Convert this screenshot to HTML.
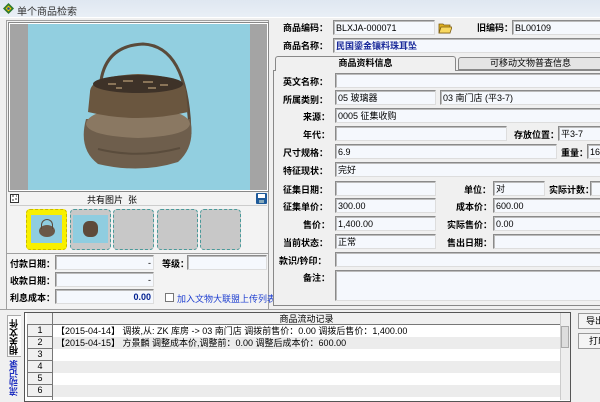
<!DOCTYPE html><html><head><meta charset="utf-8"><style>
*{box-sizing:border-box;margin:0;padding:0}
body{width:600px;height:400px;overflow:hidden;background:#f0f0f0;font-family:"Liberation Sans","Noto Sans CJK SC",sans-serif;font-size:9px;color:#000;position:relative}
.a{position:absolute}
.in{position:absolute;background:#f5f8fd;border:1px solid #8a8a8a;border-right-color:#ddd;border-bottom-color:#ddd;box-shadow:inset 1px 1px 0 #bbb;height:15px;padding:1px 2px;font-size:9px;line-height:12px;white-space:nowrap;overflow:hidden}
.lb{position:absolute;font-weight:bold;font-size:9px;line-height:12px;white-space:nowrap}
.r{text-align:right}
.th{position:absolute;width:41px;height:41px;border:1px dashed #4a9a9a;border-radius:4px;background:#c8c8c8}
.row{position:absolute;left:53px;width:507px;height:12px;font-size:9px;line-height:12px;padding-left:3px;white-space:nowrap;overflow:hidden}
.num{position:absolute;left:27px;width:26px;height:12px;border:1px solid #777;border-top:none;background:#f0f0f0;text-align:center;font-size:9px;line-height:11px}
</style></head><body>
<div class="a" style="left:0;top:0;width:600px;height:17px;background:linear-gradient(#dfe7f1,#e9eff6)"></div>
<svg class="a" style="left:3px;top:3px" width="11" height="11"><path d="M5.5 0L11 5.5 5.5 11 0 5.5Z" fill="#2f7a2f"/><path d="M5.5 2.5L8.5 5.5 5.5 8.5 2.5 5.5Z" fill="#f5c400"/><circle cx="5.5" cy="5.5" r="1.3" fill="#1a50a0"/></svg>
<div class="a" style="left:17px;top:3px;font-size:10px;color:#333">单个商品检索</div>
<div class="a" style="left:0;top:17px;width:600px;height:1px;background:#fff"></div>
<div class="a" style="left:6px;top:20px;width:263px;height:290px;border:1px solid #a0a0a0;background:#f3f3f3"></div>
<div class="a" style="left:8px;top:22px;width:261px;height:170px;border:1px solid #888;background:#fff"></div>
<div class="a" style="left:10px;top:24px;width:257px;height:166px;background:#a4a4a4"></div>
<svg class="a" style="left:28px;top:24px" width="222" height="166">
<rect width="222" height="166" fill="#92cfe0"/>
<path d="M72 70 Q72 22 115 20 Q160 22 162 110" fill="none" stroke="#5a4a3a" stroke-width="3"/>
<path d="M58 95 Q50 125 70 140 Q112 150 150 138 Q168 122 162 95Z" fill="#6e5e4c"/>
<path d="M58 100 Q60 85 110 84 Q160 85 162 100 Q160 112 110 114 Q60 112 58 100Z" fill="#8a7862"/>
<path d="M62 68 Q62 52 110 50 Q158 52 158 68 L160 88 Q110 100 60 88Z" fill="#6a563f"/>
<ellipse cx="110" cy="60" rx="45" ry="9" fill="#3e3228"/>
<path d="M80 60h8M95 57h10M115 58h10M132 61h8M88 64h6M120 64h8" stroke="#8a7458" stroke-width="2"/>
<path d="M70 125 Q110 135 152 124" fill="none" stroke="#5a4c3c" stroke-width="2"/>
</svg>
<svg class="a" style="left:10px;top:194px" width="9" height="9"><rect x=".5" y=".5" width="8" height="8" fill="#fff" stroke="#333"/><path d="M2 2h2M5 5h2M2 6h2M6 2h1" stroke="#333"/></svg>
<div class="a" style="left:87px;top:193px;font-size:9px">共有图片&nbsp; 张</div>
<svg class="a" style="left:256px;top:193px" width="11" height="11"><rect width="11" height="11" rx="1" fill="#1e5a9a"/><rect x="2" y="1" width="7" height="4" fill="#fff"/><rect x="3" y="7" width="5" height="3" fill="#8ab"/></svg>
<div class="a" style="left:10px;top:205px;width:257px;height:1px;background:#ccc"></div>
<div class="th" style="left:26px;top:209px;background:#f8f000;border-color:#c8b800"><div style="position:absolute;left:4px;top:5px;width:31px;height:28px;background:#8fcde0"></div><div style="position:absolute;left:12px;top:15px;width:16px;height:12px;border-radius:50%;background:#6a5848"></div><div style="position:absolute;left:14px;top:9px;width:12px;height:10px;border:1px solid #5a4a3a;border-bottom:none;border-radius:6px 6px 0 0"></div></div>
<div class="th" style="left:70px;top:209px"><div style="position:absolute;left:2px;top:5px;width:35px;height:28px;background:#8fcde0"></div><div style="position:absolute;left:12px;top:11px;width:15px;height:16px;border-radius:40%;background:#5e4a3a"></div></div>
<div class="th" style="left:113px;top:209px"></div>
<div class="th" style="left:157px;top:209px"></div>
<div class="th" style="left:200px;top:209px"></div>
<div class="a" style="left:6px;top:253px;width:263px;height:1px;background:#a0a0a0"></div>
<div class="lb" style="left:10px;top:258px">付款日期：</div>
<div class="in r" style="left:55px;top:255px;width:99px">-</div>
<div class="lb" style="left:162px;top:258px">等级：</div>
<div class="in" style="left:187px;top:255px;width:80px"></div>
<div class="lb" style="left:10px;top:275px">收款日期：</div>
<div class="in r" style="left:55px;top:272px;width:99px">-</div>
<div class="lb" style="left:10px;top:292px">利息成本：</div>
<div class="in r" style="left:55px;top:289px;width:99px;font-weight:bold;color:#002090">0.00</div>
<div class="a" style="left:165px;top:293px;width:9px;height:9px;border:1px solid #777;background:#fff"></div>
<div class="a" style="left:177px;top:292px;color:#2040d0;font-size:9px">加入文物大联盟上传列表</div>
<div class="lb" style="left:283px;top:22px">商品编码：</div>
<div class="in" style="left:333px;top:20px;width:102px">BLXJA-000071</div>
<svg class="a" style="left:438px;top:21px" width="14" height="13"><path d="M1 3h4l1 1h6v8H1Z" fill="#e0b020" stroke="#7a5a10" stroke-width=".8"/><path d="M3 6h11l-2 6H1Z" fill="#f8d860" stroke="#7a5a10" stroke-width=".8"/></svg>
<div class="lb" style="left:477px;top:22px">旧编码：</div>
<div class="in" style="left:512px;top:20px;width:90px">BL00109</div>
<div class="lb" style="left:283px;top:40px">商品名称：</div>
<div class="in" style="left:333px;top:38px;width:270px;color:#1a2a9a;font-weight:bold">民国鎏金镶料珠耳坠</div>
<div class="a" style="left:273px;top:70px;width:330px;height:236px;border:1px solid #888;border-right:none;background:#f0f0f0"></div>
<div class="a" style="left:275px;top:56px;width:181px;height:15px;border:1px solid #888;border-bottom:none;border-radius:3px 3px 0 0;background:#f0f0f0;text-align:center;font-weight:bold;line-height:13px">商品资料信息</div>
<div class="a" style="left:458px;top:57px;width:145px;height:13px;border:1px solid #888;border-radius:3px 3px 0 0;background:#e4e4e4;text-align:center;line-height:11px">可移动文物普查信息</div>
<div class="lb" style="left:283px;top:76px">英文名称：</div><div class="in" style="left:335px;top:73px;width:268px"></div>
<div class="lb" style="left:283px;top:94px">所属类别：</div><div class="in" style="left:335px;top:90px;width:101px">05 玻璃器</div><div class="in" style="left:440px;top:90px;width:163px">03 南门店 (平3-7)</div>
<div class="lb r" style="left:283px;top:111px;width:47px">来源：</div><div class="in" style="left:335px;top:108px;width:268px">0005 征集收购</div>
<div class="lb r" style="left:283px;top:129px;width:47px">年代：</div><div class="in" style="left:335px;top:126px;width:172px"></div>
<div class="lb" style="left:514px;top:129px">存放位置：</div><div class="in" style="left:558px;top:126px;width:45px">平3-7</div>
<div class="lb" style="left:283px;top:147px">尺寸规格：</div><div class="in" style="left:335px;top:144px;width:222px">6.9</div>
<div class="lb" style="left:561px;top:147px">重量：</div><div class="in" style="left:587px;top:144px;width:20px">16</div>
<div class="lb" style="left:283px;top:165px">特征现状：</div><div class="in" style="left:335px;top:162px;width:268px">完好</div>
<div class="lb" style="left:283px;top:184px">征集日期：</div><div class="in" style="left:335px;top:181px;width:101px"></div>
<div class="lb" style="left:464px;top:184px">单位：</div><div class="in" style="left:493px;top:181px;width:52px">对</div>
<div class="lb" style="left:549px;top:184px">实际计数：</div><div class="in" style="left:590px;top:181px;width:15px"></div>
<div class="lb" style="left:283px;top:201px">征集单价：</div><div class="in" style="left:335px;top:198px;width:101px">300.00</div>
<div class="lb" style="left:456px;top:201px">成本价：</div><div class="in" style="left:493px;top:198px;width:110px">600.00</div>
<div class="lb r" style="left:283px;top:219px;width:47px">售价：</div><div class="in" style="left:335px;top:216px;width:101px">1,400.00</div>
<div class="lb" style="left:447px;top:219px">实际售价：</div><div class="in" style="left:493px;top:216px;width:110px">0.00</div>
<div class="lb" style="left:283px;top:237px">当前状态：</div><div class="in" style="left:335px;top:234px;width:101px">正常</div>
<div class="lb" style="left:447px;top:237px">售出日期：</div><div class="in" style="left:493px;top:234px;width:110px"></div>
<div class="lb" style="left:279px;top:255px">款识/钤印：</div><div class="in" style="left:335px;top:252px;width:268px"></div>
<div class="lb r" style="left:283px;top:272px;width:47px">备注：</div><div class="in" style="left:335px;top:270px;width:268px;height:31px"></div>
<div class="a" style="left:0;top:309px;width:600px;height:1px;background:#a0a0a0"></div>
<div class="a" style="left:7px;top:315px;width:14px;height:42px;background:#fbfbfb;border:1px solid #aaa;border-right:none"></div>
<div class="a" style="left:8px;top:319px;font-weight:bold;font-size:9px;writing-mode:vertical-rl;transform:rotate(180deg);line-height:12px">相关文件</div>
<div class="a" style="left:8px;top:360px;font-weight:bold;font-size:9px;color:#2030c0;writing-mode:vertical-rl;transform:rotate(180deg);line-height:12px">流动记录</div>
<div class="a" style="left:24px;top:312px;width:547px;height:90px;border:1px solid #555;background:#fff"></div>
<div class="a" style="left:27px;top:313px;width:533px;height:12px;background:#f0f0f0;border-bottom:1px solid #777"></div>
<div class="a" style="left:52px;top:313px;width:1px;height:87px;background:#777"></div>
<div class="a" style="left:53px;top:313px;width:507px;text-align:center;line-height:12px">商品流动记录</div>
<div class="num" style="top:325px">1</div><div class="num" style="top:337px">2</div><div class="num" style="top:349px">3</div><div class="num" style="top:361px">4</div><div class="num" style="top:373px">5</div><div class="num" style="top:385px">6</div>
<div class="row" style="top:325px;background:#fff">【2015-04-14】 调拨,从: ZK 库房 -&gt; 03 南门店 调拨前售价：0.00 调拨后售价：1,400.00</div>
<div class="row" style="top:337px;background:#ececec">【2015-04-15】 方景麟 调整成本价,调整前：0.00 调整后成本价：600.00</div>
<div class="row" style="top:361px;background:#ececec"></div>
<div class="row" style="top:385px;background:#ececec"></div>
<div class="a" style="left:560px;top:313px;width:10px;height:87px;background:#eee;border-left:1px solid #ccc"></div>
<div class="a" style="left:561px;top:326px;width:8px;height:22px;background:#ddd;border:1px solid #aaa"></div>
<div class="a" style="left:578px;top:313px;width:30px;height:16px;border:1px solid #999;background:#f4f4f4;padding-left:7px;line-height:14px">导出</div>
<div class="a" style="left:578px;top:333px;width:30px;height:16px;border:1px solid #999;background:#f4f4f4;padding-left:10px;line-height:14px">打印</div>
</body></html>
